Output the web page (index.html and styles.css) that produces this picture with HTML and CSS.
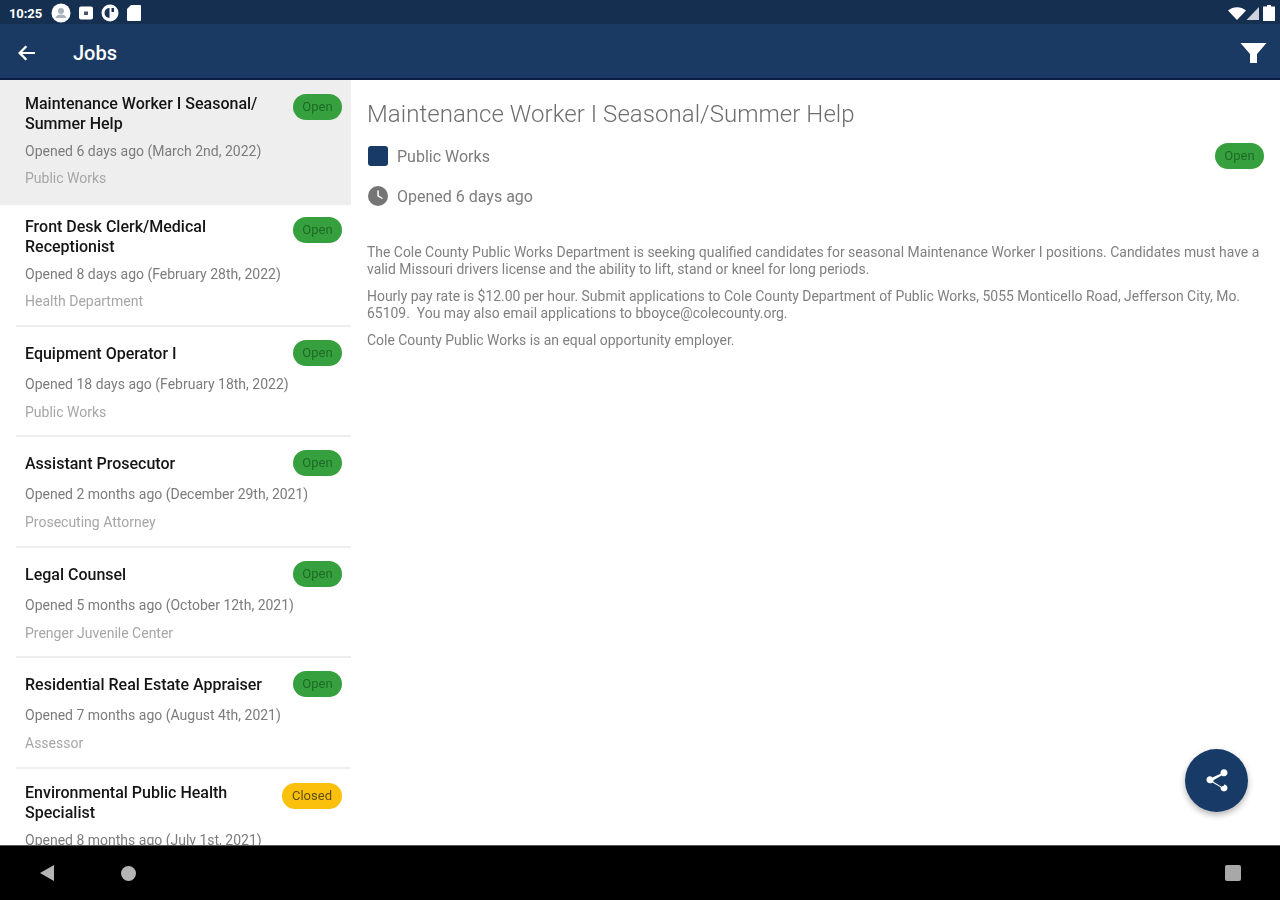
FILE: index.html
```html
<!DOCTYPE html>
<html lang="en">
<head>
<meta charset="utf-8">
<title>Jobs</title>
<link rel="stylesheet" href="styles.css">
</head>
<body>
<div class="app">
  <div class="statusbar">
    <span class="time">10:25</span>
    <svg class="st" width="20" height="20" viewBox="0 0 20 20"><circle cx="10" cy="10" r="9.500" fill="#fff"/><circle cx="10" cy="8" r="3" fill="#a9b1bd"/><path d="M4.500 15c1-3 3-3.500 5.500-3.500s4.500.5 5.500 3.500" fill="#a9b1bd"/></svg>
    <svg class="st" width="14" height="20" viewBox="0 0 14 20"><rect x="0" y="3.500" width="14" height="13" rx="2" fill="#fff"/><rect x="5" y="8.500" width="4" height="3.500" fill="#45566f"/></svg>
    <svg class="st" width="18" height="20" viewBox="0 0 18 20"><circle cx="9" cy="10" r="8.500" fill="#fff"/><path d="M8.500 5a5 5 0 0 0 0 10z" fill="#1a3355"/><rect x="10.500" y="5" width="2.500" height="4" fill="#1a3355"/></svg>
    <svg class="st" width="14" height="20" viewBox="0 0 14 20"><path d="M4 2h9a1 1 0 0 1 1 1v14a1 1 0 0 1-1 1H1a1 1 0 0 1-1-1V6z" fill="#fff"/></svg>
    <span class="spacer"></span>
    <svg width="18" height="16" viewBox="0 0 18 16"><path d="M0 5.500C5 1 13 1 18 5.500L9 15z" fill="#fff"/></svg>
    <svg width="13" height="16" viewBox="0 0 13 16"><path d="M0.500 15L13 2v13z" fill="#cfd4dc"/></svg>
    <svg class="batt" width="12" height="16" viewBox="0 0 12 16"><path d="M4 0h4v1.500h4V16H0V1.500h4z" fill="#fff"/></svg>
  </div>
  <header class="appbar">
    <svg class="back" width="20" height="20" viewBox="0 0 20 20"><path d="M19 9H6.300l4.900-4.900L9.500 2.500 2 10l7.500 7.500 1.700-1.600L6.300 11H19z" fill="#fff"/></svg>
    <h1 class="apptitle">Jobs</h1>
    <span class="spacer"></span>
    <svg class="filter" width="27" height="22" viewBox="0 0 27 22"><path d="M0.500 1h26l-9.500 11v9h-7V12z" fill="#fff"/></svg>
  </header>
  <main class="content">
    <aside class="list">
      <article class="item selected">
        <div class="item-head"><h2 class="item-title">Maintenance Worker I Seasonal/<br>Summer Help</h2><span class="pill open">Open</span></div>
        <p class="meta">Opened 6 days ago (March 2nd, 2022)</p>
        <p class="dept">Public Works</p>
      </article>
      <article class="item tight">
        <div class="item-head"><h2 class="item-title">Front Desk Clerk/Medical<br>Receptionist</h2><span class="pill open">Open</span></div>
        <p class="meta">Opened 8 days ago (February 28th, 2022)</p>
        <p class="dept">Health Department</p>
      </article>
      <article class="item single">
        <div class="item-head"><h2 class="item-title">Equipment Operator I</h2><span class="pill open">Open</span></div>
        <p class="meta">Opened 18 days ago (February 18th, 2022)</p>
        <p class="dept">Public Works</p>
      </article>
      <article class="item single">
        <div class="item-head"><h2 class="item-title">Assistant Prosecutor</h2><span class="pill open">Open</span></div>
        <p class="meta">Opened 2 months ago (December 29th, 2021)</p>
        <p class="dept">Prosecuting Attorney</p>
      </article>
      <article class="item single">
        <div class="item-head"><h2 class="item-title">Legal Counsel</h2><span class="pill open">Open</span></div>
        <p class="meta">Opened 5 months ago (October 12th, 2021)</p>
        <p class="dept">Prenger Juvenile Center</p>
      </article>
      <article class="item single">
        <div class="item-head"><h2 class="item-title">Residential Real Estate Appraiser</h2><span class="pill open">Open</span></div>
        <p class="meta">Opened 7 months ago (August 4th, 2021)</p>
        <p class="dept">Assessor</p>
      </article>
      <article class="item">
        <div class="item-head"><h2 class="item-title">Environmental Public Health<br>Specialist</h2><span class="pill closed">Closed</span></div>
        <p class="meta">Opened 8 months ago (July 1st, 2021)</p>
      </article>
    </aside>
    <section class="detail">
      <h2 class="detail-title">Maintenance Worker I Seasonal/Summer Help</h2>
      <div class="detail-row dept-row">
        <span class="swatch"></span>
        <span class="detail-label">Public Works</span>
        <span class="spacer"></span>
        <span class="pill open">Open</span>
      </div>
      <div class="detail-row clock-row">
        <svg class="clock" width="20" height="20" viewBox="0 0 20 20"><circle cx="10" cy="10" r="10" fill="#757575"/><path d="M9.300 4.500h1.500v5l4 2.400-.8 1.200-4.700-2.800z" fill="#fff"/></svg>
        <span class="detail-label">Opened 6 days ago</span>
      </div>
      <div class="body-text">
        <p>The Cole County Public Works Department is seeking qualified candidates for seasonal Maintenance Worker I positions. Candidates must have a valid Missouri drivers license and the ability to lift, stand or kneel for long periods.</p>
        <p>Hourly pay rate is $12.00 per hour. Submit applications to Cole County Department of Public Works, 5055 Monticello Road, Jefferson City, Mo. 65109.  You may also email applications to bboyce@colecounty.org.</p>
        <p>Cole County Public Works is an equal opportunity employer.</p>
      </div>
      <button class="fab" type="button" aria-label="Share">
        <svg width="28" height="28" viewBox="0 0 24 24"><path d="M18 16.100c-.8 0-1.400.3-2 .8l-7.100-4.200c.1-.2.100-.5.100-.7s0-.5-.1-.7L16 7.200c.5.500 1.200.8 2 .8 1.700 0 3-1.300 3-3s-1.300-3-3-3-3 1.300-3 3c0 .2 0 .5.100.7L8 8.900C7.500 8.400 6.800 8 6 8c-1.700 0-3 1.300-3 3s1.300 3 3 3c.8 0 1.500-.3 2-.8l7.100 4.200c-.1.200-.1.400-.1.600 0 1.600 1.300 2.900 3 2.900s3-1.300 3-2.900-1.300-2.900-3-2.900z" fill="#fff"/></svg>
      </button>
    </section>
  </main>
  <nav class="navbar">
    <svg class="nav-back" width="16" height="18" viewBox="0 0 16 18"><path d="M15 1v16L1 9z" fill="#b5b5b5"/></svg>
    <span class="nav-home"></span>
    <span class="spacer"></span>
    <span class="nav-recent"></span>
  </nav>
</div>
</body>
</html>
```
FILE: styles.css
```css
* { box-sizing: border-box; }
html, body { margin: 0; padding: 0; height: 100%; background: #fff; }
body { font-family: Roboto, "Liberation Sans", sans-serif; overflow: hidden; }
h1, h2, p { margin: 0; }
.app { width: 1280px; height: 900px; display: flex; flex-direction: column; overflow: hidden; filter: blur(0.6px); }
.spacer { flex: 1; }

.statusbar { height: 24px; background: #152f50; display: flex; align-items: center; padding: 2px 5px 0 9px; color: #fff; flex: none; }
.time { font-size: 13px; font-weight: 700; margin-right: 1px; letter-spacing: -0.1px; }
.st { margin-left: 8px; }
.batt { margin-left: 4px; }

.appbar { height: 56px; background: #1a3a63; border-bottom: 2px solid #0b1c45; display: flex; align-items: center; padding: 4px 13px 0 16px; flex: none; }
.back { margin-right: 37px; }
.apptitle { color: #fff; font-size: 20px; font-weight: 500; }

.content { flex: 1; min-height: 0; display: flex; }
.list { width: 351px; flex: none; overflow: hidden; }
.item { margin-left: 16px; padding: 14px 9px 0 9px; height: 122px; border-bottom: 2px solid #eeeeee; }
.item.tight { padding-top: 12px; }
.item.single { height: 110.4px; padding-top: 13px; }
.item.selected { margin-left: 0; padding: 14px 9px 0 25px; height: 125px; background: #eeeeee; border-bottom: none; }
.item-head { display: flex; justify-content: space-between; align-items: flex-start; min-height: 40px; }
.item.single .item-head { min-height: 26px; align-items: center; }
.item.single .item-title { padding-top: 2px; }
.item-title { font-size: 16px; font-weight: 500; line-height: 20px; color: #151515; }
.meta { font-size: 14px; line-height: 20px; color: #7c7c7c; margin-top: 7px; }
.dept { font-size: 14px; line-height: 18px; color: #a6a6a6; margin-top: 8px; }
.item.single .meta { margin-top: 8px; }
.item.single .dept { margin-top: 9px; }

.pill { font-size: 13px; line-height: 26px; height: 26px; padding: 0 9px; border-radius: 13px; flex: none; }
.pill.open { background: #36a03e; color: #1d6b25; min-width: 49px; text-align: center; }
.pill.closed { background: #fbc00c; color: #5d4f10; min-width: 60px; text-align: center; }

.detail { flex: 1; position: relative; padding: 18px 16px 0 16px; min-width: 0; }
.detail-title { font-size: 24px; font-weight: 300; line-height: 32px; color: #6e6e6e; letter-spacing: 0.05px; }
.detail-row { display: flex; align-items: center; }
.dept-row { margin-top: 11px; height: 30px; }
.clock-row { margin-top: 10px; height: 30px; }
.swatch { width: 20px; height: 20px; border-radius: 3px; background: #173a66; margin: 0 1px; }
.clock { margin: 0 1px; }
.detail-label { font-size: 16px; color: #7c7c7c; margin-left: 8px; }
.body-text { margin-top: 33px; font-size: 13.94px; line-height: 16.5px; color: #808080; }
.body-text p { margin-bottom: 11px; white-space: pre-wrap; }

.fab { position: absolute; right: 32px; bottom: 33px; width: 63px; height: 63px; border-radius: 50%; background: #173a66; border: none; padding: 0; display: flex; align-items: center; justify-content: center; box-shadow: 0 3px 6px rgba(0,0,0,0.3); }

.navbar { height: 55px; background: #000; border-top: 1px solid #555; display: flex; align-items: center; padding: 0 39px; flex: none; }
.nav-back { margin-right: 66px; }
.nav-home { width: 15px; height: 15px; border-radius: 50%; background: #b5b5b5; }
.nav-recent { width: 16px; height: 16px; background: #a8a8a8; border-radius: 2px; }
```
